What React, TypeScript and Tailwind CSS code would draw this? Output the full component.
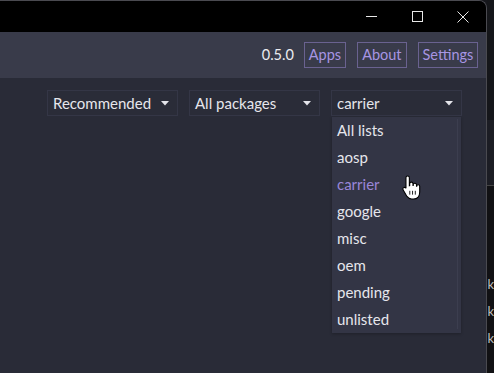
import React from 'react';

const lists = ['All lists', 'aosp', 'carrier', 'google', 'misc', 'oem', 'pending', 'unlisted'];

const Caret = () => (
  <svg width="8" height="5" viewBox="0 0 8 5" className="shrink-0">
    <path d="M0 0 L8 0 L4 4.5 Z" fill="#e4e4ea" />
  </svg>
);

const Select = ({ value }: { value: string }) => (
  <div className="w-[131px] h-[26px] flex items-center justify-between pl-[5px] pr-[8px] border border-[#343646] bg-[#2a2c38] text-[15px] text-[#e6e6ec]">
    <span>{value}</span>
    <Caret />
  </div>
);

const HandCursor = () => (
  <svg width="22" height="27" viewBox="0 0 20 24" className="absolute left-[401px] top-[174px] z-20">
    <path
      d="M6 1.5c1 0 1.6.7 1.6 1.7v7.2l.3-.1V8.6c0-1 .7-1.5 1.5-1.5s1.5.6 1.5 1.5v1.6h.2V9.5c0-.9.7-1.4 1.5-1.4s1.5.6 1.5 1.4v1.3h.2c0-.8.6-1.3 1.3-1.3.8 0 1.4.6 1.4 1.4v5.3c0 3.6-2.2 6.3-5.6 6.3H9.7c-2 0-3.2-.9-4.3-2.4L2 14.2c-.5-.8-.3-1.7.4-2.1.7-.4 1.5-.2 2 .4l.1.2V3.2C4.5 2.2 5.1 1.5 6 1.5z"
      fill="#ffffff"
      stroke="#000000"
      strokeWidth="1"
    />
    <path d="M8 15v3.5M10.5 15v3.5M13 15v3.5" stroke="#000" strokeWidth="0.8" />
  </svg>
);

export default function App() {
  return (
    <div className="relative w-[494px] h-[373px] overflow-hidden flex bg-[#16171c] font-['Lato','Noto_Sans',sans-serif]">
      <div className="w-[489px] h-full flex flex-col rounded-tr-[8px] overflow-hidden border-r border-t border-[#4a4a50]">
        {/* title bar */}
        <div className="h-[31px] bg-black flex justify-end shrink-0">
          <div className="w-[46px] flex items-center justify-center">
            <div className="w-[11px] h-px bg-[#e8e8e8]" />
          </div>
          <div className="w-[46px] flex items-center justify-center">
            <div className="w-[11px] h-[11px] border border-[#e8e8e8]" />
          </div>
          <div className="w-[46px] flex items-center justify-center">
            <svg width="12" height="12" viewBox="0 0 12 12">
              <path d="M0.5 0.5 L11.5 11.5 M11.5 0.5 L0.5 11.5" stroke="#e8e8e8" strokeWidth="1" />
            </svg>
          </div>
        </div>

        {/* header */}
        <div className="h-[46px] bg-[#393b4a] flex items-center justify-end gap-[11px] pr-[8px] shrink-0 text-[14.5px]">
          <span className="text-[#ececf0] mr-[-1px]">0.5.0</span>
          <div className="h-[26px] px-[4px] flex items-center border border-[#6a6290] text-[#a795e3]">Apps</div>
          <div className="h-[26px] px-[4px] flex items-center border border-[#6a6290] text-[#a795e3]">About</div>
          <div className="h-[26px] px-[4px] flex items-center border border-[#6a6290] text-[#a795e3]">Settings</div>
        </div>

        {/* content */}
        <div className="relative flex-1 bg-[#292b37] pt-[12px]">
          <div className="flex gap-[11px] pl-[47px]">
            <Select value="Recommended" />
            <Select value="All packages" />
            <div className="relative">
              <Select value="carrier" />
              <div className="absolute left-px top-[27px] w-[129px] bg-[#333545] shadow-[0_1px_3px_rgba(0,0,0,0.25)] z-10">
                {lists.map((l) => (
                  <div
                    key={l}
                    className={`h-[27px] flex items-center pl-[5px] text-[15px] ${l === 'carrier' ? 'text-[#9a86d8]' : 'text-[#e6e6ec]'}`}
                  >
                    {l}
                  </div>
                ))}
                <div className="absolute right-[3px] top-[2px] bottom-[4px] w-px bg-[#3c3e4f]" />
              </div>
            </div>
          </div>
        </div>
      </div>

      {/* desktop strip */}
      <div className="flex-1 h-full bg-[#111114] flex flex-col text-[13px] text-[#bdbdbd] leading-none">
        <div className="h-[120px] bg-[#15161a]" />
        <div className="h-[65px] bg-[#1c1d24]" />
        <div className="h-px bg-[#444]" />
        <div className="h-[92px]" />
        <div className="flex flex-col gap-[14px]">
          <span>k</span>
          <span>k</span>
          <span>k</span>
        </div>
      </div>

      <HandCursor />
    </div>
  );
}
